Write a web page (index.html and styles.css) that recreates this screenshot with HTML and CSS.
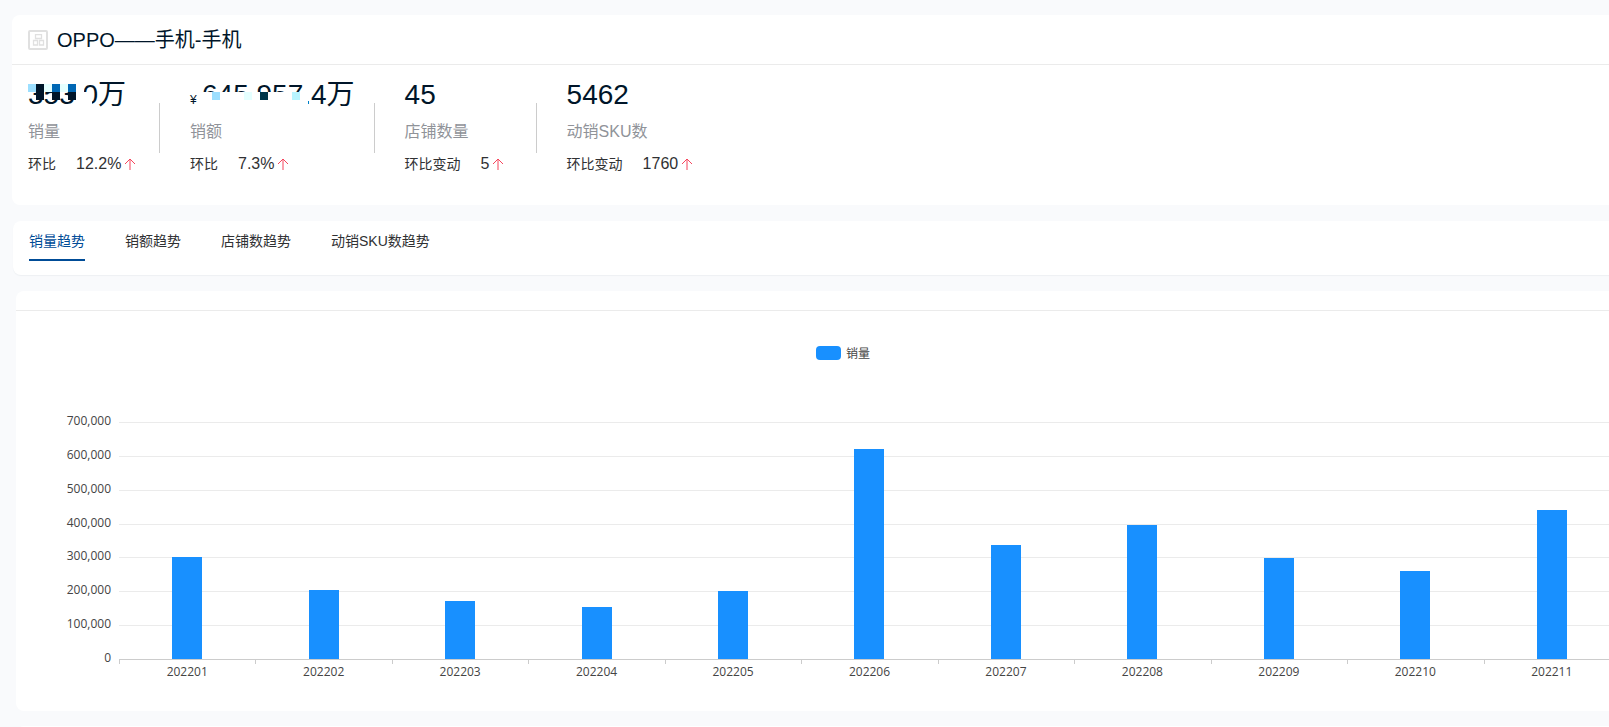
FILE: index.html
```
<!DOCTYPE html>
<html lang="zh-CN">
<head>
  <title>OPPO——手机-手机</title>
  <meta charset="UTF-8"/>
  <meta name="viewport" content="width=device-width,initial-scale=1"/>
  <link rel="stylesheet" href="styles.css">
</head>
<body>
  <svg class="defs" width="0" height="0">
    <symbol id="up" viewBox="0 0 12 12">
      <path d="M6 12V1M1 6L6 1L11 6" fill="none" stroke="currentColor"/>
    </symbol>
  </svg>
  <main class="page">
    <section class="card overview">
      <header class="title">
        <svg class="logo" width="20" height="20" viewBox="0 0 20 20" fill="none" stroke="#e0e0e0">
          <rect x="1" y="1" width="18" height="18" rx="1" stroke-width="2"/>
          <path stroke-width="1.300" d="M7.500 4.700h6v3.800h-6zM5.500 10.500h4v4.500h-4zM11.500 10.500h4v4.500h-4z"/>
        </svg>
        <h1>OPPO——手机-手机</h1>
      </header>
      <div class="stats">
        <div class="stat">
          <div class="num">353.0万
            <svg class="mask" width="72" height="24" viewBox="0 0 72 24">
              <path fill="#fff" d="M48 0h8v24h-8zM56 8h8v16h-8z"/>
              <path fill="#9cdfff" d="M0 0h8v8H0z"/>
              <path fill="#001529" d="M8 0h8v16H8zM24 8h8v8h-8zM40 8h8v8h-8z"/>
              <path fill="#e5ffff" d="M16 0h8v8h-8zM32 0h8v8h-8z"/>
              <path fill="#0067b4" d="M24 0h8v8h-8zM40 0h8v8h-8z"/>
            </svg>
          </div>
          <div class="label">销量</div>
          <div class="change">环比 <b>12.2%</b><svg class="up"><use href="#up"/></svg></div>
        </div>
        <div class="stat">
          <div class="num"><small>¥</small>645,957.4万
            <svg class="mask" width="120" height="24" viewBox="0 0 120 24">
              <path fill="#fff" d="M10 8h108v16H10z"/>
              <path fill="#9cdfff" d="M22 8h8v8h-8z"/>
              <path fill="#e5ffff" d="M54 8h8v8h-8z"/>
              <path fill="#003549" d="M70 8h8v8h-8z"/>
              <path fill="#b8f4ff" d="M102 8h8v8h-8z"/>
              <path fill="#0080c8" d="M118 17h1v3h-1z"/>
            </svg>
          </div>
          <div class="label">销额</div>
          <div class="change">环比 <b>7.3%</b><svg class="up"><use href="#up"/></svg></div>
        </div>
        <div class="stat">
          <div class="num">45</div>
          <div class="label">店铺数量</div>
          <div class="change">环比变动 <b>5</b><svg class="up"><use href="#up"/></svg></div>
        </div>
        <div class="stat">
          <div class="num">5462</div>
          <div class="label">动销SKU数</div>
          <div class="change">环比变动 <b>1760</b><svg class="up"><use href="#up"/></svg></div>
        </div>
      </div>
    </section>

    <nav class="card tabs">
      <button class="active">销量趋势</button>
      <button>销额趋势</button>
      <button>店铺数趋势</button>
      <button>动销SKU数趋势</button>
    </nav>

    <section class="card chart">
      <div class="legend"><i></i>销量</div>
      <div class="plot">
        <div class="yaxis">
          <span>700,000</span>
          <span>600,000</span>
          <span>500,000</span>
          <span>400,000</span>
          <span>300,000</span>
          <span>200,000</span>
          <span>100,000</span>
          <span>0</span>
        </div>
        <div class="lines"><i></i><i></i><i></i><i></i><i></i><i></i><i></i></div>
        <div class="bars">
          <i style="height:43.1%"></i>
          <i style="height:29.1%"></i>
          <i style="height:24.5%"></i>
          <i style="height:21.9%"></i>
          <i style="height:28.7%"></i>
          <i style="height:88.6%"></i>
          <i style="height:48.2%"></i>
          <i style="height:56.5%"></i>
          <i style="height:42.6%"></i>
          <i style="height:37.0%"></i>
          <i style="height:62.9%"></i>
        </div>
        <div class="xaxis">
          <span>202201</span>
          <span>202202</span>
          <span>202203</span>
          <span>202204</span>
          <span>202205</span>
          <span>202206</span>
          <span>202207</span>
          <span>202208</span>
          <span>202209</span>
          <span>202210</span>
          <span>202211</span>
        </div>
      </div>
    </section>

    <section class="card next"></section>
  </main>
</body>
</html>
```
FILE: styles.css
```
* {
  box-sizing: border-box;
}
body {
  margin: 0;
  overflow-x: hidden;
  background: #f9fafc;
  color: #303133;
  font-family: "Liberation Sans", "Noto Sans CJK SC", sans-serif;
  font-size: 14px;
}
.defs {
  position: absolute;
}
/* the cards run on past the right edge of the window */
.page {
  height: 100vh;
  margin-right: -61px;
  padding-top: 15px;
  overflow: hidden;
}
.card {
  background: #fff;
  border-radius: 8px;
}
.overview {
  height: 190px;
  margin-left: 12px;
}
.title {
  display: flex;
  align-items: center;
  gap: 9px;
  height: 50px;
  padding-left: 16px;
  border-bottom: 1px solid #ebebeb;
}
h1 {
  margin: 0;
  font-size: 20px;
  font-weight: normal;
  line-height: 28px;
  color: #001529;
}
.stats {
  display: flex;
  gap: 30px;
  padding: 12px 16px;
}
.stat {
  position: relative;
  min-width: 132px;
  padding-right: 20px;
  white-space: nowrap;
}
.stat:not(:last-child)::after {
  content: "";
  position: absolute;
  top: 26px;
  right: 0;
  width: 1px;
  height: 50px;
  background: #ccc;
}
.num {
  position: relative;
  height: 36px;
  font-size: 28px;
  line-height: 36px;
  color: #001529;
}
.num small {
  display: inline-block;
  width: 12px;
  font-size: 12px;
}
.mask {
  position: absolute;
  top: 7px;
  left: 0;
}
.label {
  margin-top: 7px;
  font-size: 16px;
  line-height: 24px;
  color: #909399;
}
.change {
  display: flex;
  align-items: center;
  margin-top: 8px;
  line-height: 24px;
}
.change b {
  margin: 0 3px 0 20px;
  font-size: 16px;
  font-weight: normal;
}
.up {
  width: 12px;
  height: 12px;
  color: #f5455c;
}
.tabs {
  display: flex;
  gap: 40px;
  height: 54px;
  margin: 16px 0 0 13px;
  padding-left: 16px;
  box-shadow: 0 1px 1px #eef0f3;
}
.tabs button {
  height: 40px;
  padding: 0;
  border: 0;
  border-bottom: 2px solid transparent;
  background: none;
  color: inherit;
  font: inherit;
}
.tabs .active {
  border-color: #004c97;
  color: #004c97;
}
.chart {
  margin: 16px 0 0 16px;
  height: 420px;
  padding-top: 19px;
  font-family: "Open Sans", "Noto Sans CJK SC", sans-serif;
  font-size: 12px;
  color: #444;
}
.legend {
  display: flex;
  justify-content: center;
  align-items: center;
  gap: 5px;
  height: 112px;
  padding-bottom: 28px;
  border-top: 1px solid #ebebeb;
}
.legend i {
  width: 25px;
  height: 14px;
  border-radius: 4px;
  background: #1890ff;
}
.plot {
  display: grid;
  grid-template-columns: 95px 1fr;
  grid-template-rows: 237px 24px;
  column-gap: 8px;
  padding-right: 50px;
}
.yaxis {
  display: flex;
  flex-direction: column;
  justify-content: space-between;
  margin: -9px 0 -7px;
  line-height: 16px;
  text-align: right;
}
.lines, .bars {
  grid-area: 1 / 2;
}
.lines {
  display: grid;
  grid-template-rows: repeat(7, 1fr);
}
.lines i {
  border-top: 1px solid #ebebeb;
}
.bars {
  display: grid;
  grid-template-columns: repeat(11, 1fr);
  align-items: end;
  justify-items: center;
}
.bars i {
  width: 30px;
  background: #1890ff;
}
.xaxis {
  grid-area: 2 / 2;
  display: grid;
  grid-template-columns: repeat(11, 1fr);
  border-top: 1px solid #ccc;
  line-height: 16px;
  text-align: center;
}
.xaxis span {
  padding-top: 4px;
  background: linear-gradient(#ccc, #ccc) no-repeat 0 0 / 1px 4px;
}
.next {
  height: 100px;
  margin: 15px 0 0 16px;
}
```
